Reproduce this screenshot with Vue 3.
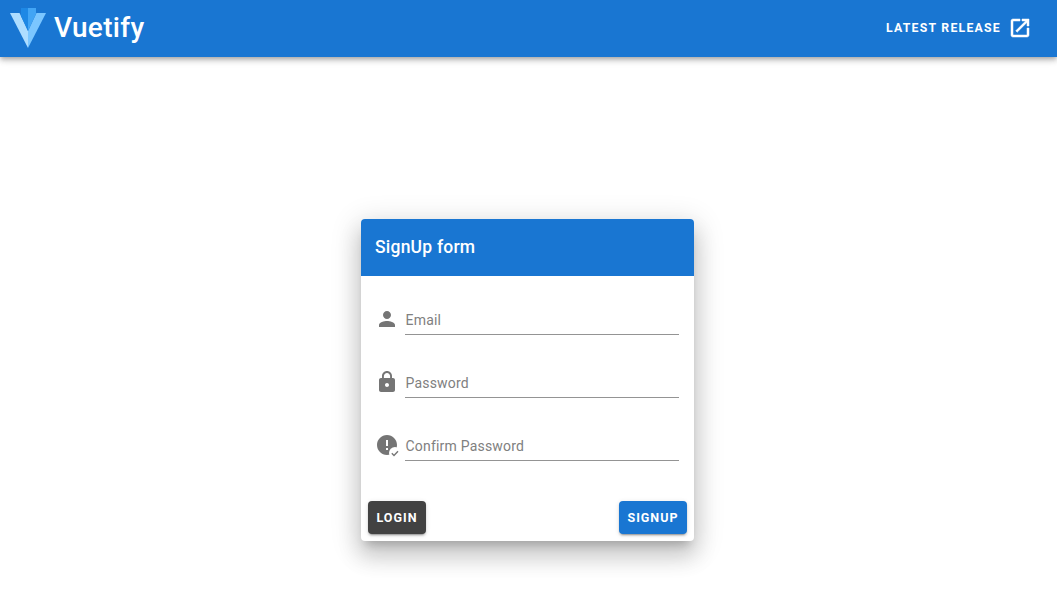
<template>
  <div class="page">
    <header class="app-bar">
      <div class="brand">
        <svg class="logo" viewBox="0 0 36 40" width="36" height="40">
          <polygon points="0,5 9.5,5 18,23 18,40" fill="#aeddff" />
          <polygon points="18,40 18,23 26,6 26.5,5 36,5" fill="#7bc6ff" />
          <polygon points="11,0 18,0 18,23 11,8" fill="#1e88e5" />
          <polygon points="18,0 26,0 26,6 18,23" fill="#42a5f5" />
        </svg>
        <span class="brand-name">Vuetify</span>
      </div>
      <a class="release">
        <span>Latest Release</span>
        <svg viewBox="0 0 24 24" width="24" height="24"><path fill="#fff" stroke="#fff" stroke-width=".5" :d="icons.open" /></svg>
      </a>
    </header>
    <main class="main">
      <div class="card">
        <div class="card-title">SignUp form</div>
        <form class="card-body" @submit.prevent>
          <div v-for="field in fields" :key="field.label" class="field">
            <svg class="field-icon" viewBox="0 0 24 24" width="24" height="24">
              <path fill="#757575" :d="field.icon" />
              <template v-if="field.check">
                <circle cx="20" cy="20" r="6" fill="#fff" />
                <path d="M16.8 20.2l2.2 2.2 4-4.2" fill="none" stroke="#757575" stroke-width="1.4" />
              </template>
            </svg>
            <label class="field-box">{{ field.label }}</label>
          </div>
        </form>
        <div class="card-actions">
          <button class="btn dark">Login</button>
          <button class="btn primary">Signup</button>
        </div>
      </div>
    </main>
  </div>
</template>

<script setup>
const icons = {
  open: 'M19 19H5V5h7V3H5c-1.11 0-2 .9-2 2v14c0 1.1.89 2 2 2h14c1.1 0 2-.9 2-2v-7h-2v7zM14 3v2h3.59l-9.83 9.83 1.41 1.41L19 6.41V10h2V3h-7z',
  person: 'M12 12c2.21 0 4-1.79 4-4s-1.79-4-4-4-4 1.79-4 4 1.79 4 4 4zm0 2c-2.67 0-8 1.34-8 4v2h16v-2c0-2.66-5.33-4-8-4z',
  lock: 'M18 8h-1V6c0-2.76-2.24-5-5-5S7 3.24 7 6v2H6c-1.1 0-2 .9-2 2v10c0 1.1.9 2 2 2h12c1.1 0 2-.9 2-2V10c0-1.1-.9-2-2-2zm-6 9c-1.1 0-2-.9-2-2s.9-2 2-2 2 .9 2 2-.9 2-2 2zm3.1-9H8.9V6c0-1.71 1.39-3.1 3.1-3.1 1.71 0 3.1 1.39 3.1 3.1v2z',
  alert: 'M12 2C6.48 2 2 6.48 2 12s4.48 10 10 10 10-4.48 10-10S17.52 2 12 2zm1 15h-2v-2h2v2zm0-4h-2V7h2v6z'
}

const fields = [
  { label: 'Email', icon: icons.person },
  { label: 'Password', icon: icons.lock },
  { label: 'Confirm Password', icon: icons.alert, check: true }
]
</script>

<style>
html, body { margin: 0; background: #fff; }
</style>

<style scoped>
.page { font-family: Roboto, "Liberation Sans", sans-serif; height: 610px; overflow: hidden; }
.app-bar {
  height: 57px;
  box-sizing: border-box;
  background: #1976d2;
  display: flex;
  align-items: center;
  justify-content: space-between;
  padding: 0 25px 1px 10px;
  box-shadow: 0 2px 4px -1px rgba(0,0,0,.2), 0 4px 5px 0 rgba(0,0,0,.14), 0 1px 10px 0 rgba(0,0,0,.12);
  position: relative;
}
.brand { display: flex; align-items: center; }
.logo { margin-top: -1px; }
.brand-name { color: #fff; font-size: 28px; font-weight: 500; margin-left: 8px; margin-top: -1px; letter-spacing: .3px; }
.release {
  display: flex;
  align-items: center;
  gap: 7px;
  color: #fff;
  font-size: 12.25px;
  font-weight: 700;
  letter-spacing: 1.25px;
  text-transform: uppercase;
}
.main { display: flex; justify-content: center; padding: 162px 2px 0 0; }
.card {
  width: 333px;
  height: 322px;
  background: #fff;
  border-radius: 4px;
  overflow: hidden;
  display: flex;
  flex-direction: column;
  box-shadow: 0 8px 9px -5px rgba(0,0,0,.2), 0 15px 22px 2px rgba(0,0,0,.14), 0 6px 28px 5px rgba(0,0,0,.12);
}
.card-title {
  height: 57px;
  background: #1976d2;
  color: #fff;
  font-size: 17.5px;
  font-weight: 500;
  letter-spacing: .0125em;
  line-height: 56px;
  padding-left: 14px;
}
.card-body { padding: 32px 15px 0 14px; display: flex; flex-direction: column; gap: 36px; flex: 1; }
.field { display: flex; align-items: flex-start; height: 27px; }
.field-icon { margin: -1px 6px 0 0; flex: none; }
.field-box {
  flex: 1;
  height: 26px;
  padding-left: .5px;
  line-height: 24px;
  border-bottom: 1px solid #949494;
  color: #808080;
  font-size: 14px;
  letter-spacing: .2px;
}
.card-actions { display: flex; justify-content: space-between; padding: 0 7px 7px; align-items: flex-end; }
.btn {
  border: 0;
  border-radius: 4px;
  height: 33px;
  padding: 0 8.5px;
  color: #fff;
  font-family: inherit;
  font-size: 12.5px;
  font-weight: 700;
  letter-spacing: 1px;
  text-transform: uppercase;
  box-shadow: 0 3px 1px -2px rgba(0,0,0,.2), 0 2px 2px 0 rgba(0,0,0,.14), 0 1px 5px 0 rgba(0,0,0,.12);
}
.dark { background: #424242; }
.primary { background: #1976d2; }
</style>
